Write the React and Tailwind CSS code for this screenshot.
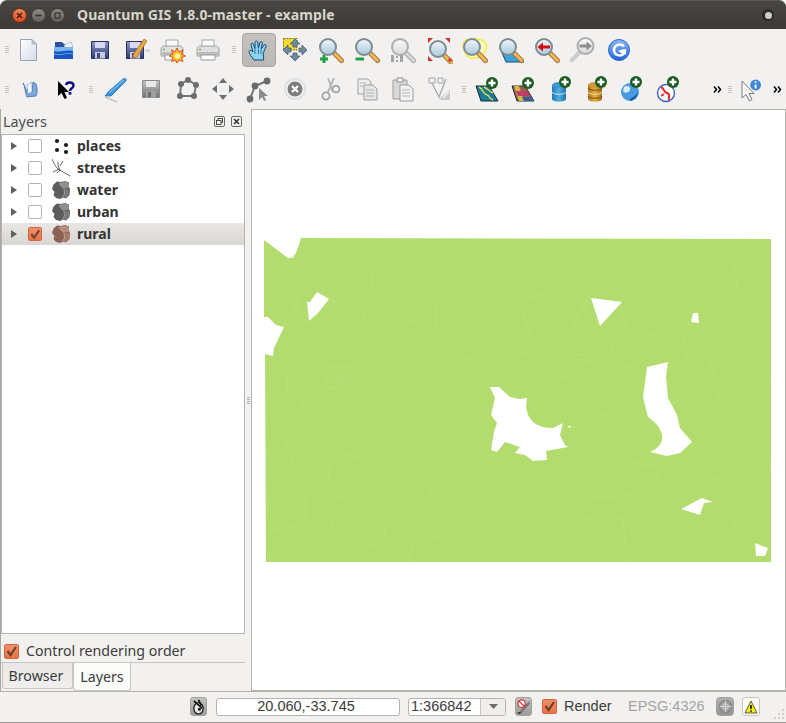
const UI_FONT = "font-['Noto_Sans',sans-serif]";

const Defs = () => (
  <svg className="h-0 w-0" aria-hidden="true">
    <defs>
      <linearGradient id="page" x1="0" y1="0" x2="1" y2="1">
        <stop offset="0" stopColor="#ffffff" />
        <stop offset="1" stopColor="#d5dbe6" />
      </linearGradient>
      <linearGradient id="floppy" x1="0" y1="0" x2="0" y2="1">
        <stop offset="0" stopColor="#8f9ac8" />
        <stop offset="1" stopColor="#2f3a78" />
      </linearGradient>
      <linearGradient id="floppyGrey" x1="0" y1="0" x2="0" y2="1">
        <stop offset="0" stopColor="#c6c6c6" />
        <stop offset="1" stopColor="#707070" />
      </linearGradient>
      <linearGradient id="lens" x1="0" y1="0" x2="0" y2="1">
        <stop offset="0" stopColor="#f0f6fa" />
        <stop offset="1" stopColor="#a9c8da" />
      </linearGradient>
      <linearGradient id="lensGrey" x1="0" y1="0" x2="0" y2="1">
        <stop offset="0" stopColor="#fafafa" />
        <stop offset="1" stopColor="#d8d8d8" />
      </linearGradient>
      <linearGradient id="blueBall" x1="0" y1="0" x2="0" y2="1">
        <stop offset="0" stopColor="#8fb8f5" />
        <stop offset="1" stopColor="#1f63d8" />
      </linearGradient>
      <linearGradient id="db" x1="0" y1="0" x2="1" y2="0">
        <stop offset="0" stopColor="#1f78b4" />
        <stop offset="0.5" stopColor="#55aee0" />
        <stop offset="1" stopColor="#1e6fa6" />
      </linearGradient>
      <linearGradient id="dbGold" x1="0" y1="0" x2="1" y2="0">
        <stop offset="0" stopColor="#b5791a" />
        <stop offset="0.5" stopColor="#e6ad3f" />
        <stop offset="1" stopColor="#a86f14" />
      </linearGradient>
    </defs>
  </svg>
);

const Ico = ({ children, size = 28 }) => (
  <svg width={size} height={size} viewBox="0 0 28 28" className="block shrink-0">
    {children}
  </svg>
);

const Plus = ({ x, y }) => (
  <g>
    <circle cx={x} cy={y} r="6" fill="#1d5b20" />
    <path d={`M${x - 3.5} ${y}H${x + 3.5}M${x} ${y - 3.5}V${y + 3.5}`} stroke="#fff" strokeWidth="2.4" />
  </g>
);

const Lens = ({ grey, children }) => (
  <g>
    <path d="M16 16L18 18" stroke={grey ? "#a8a8a8" : "#7b8288"} strokeWidth="3" />
    <path d="M18 18L24.5 24.5" stroke={grey ? "#a8a8a8" : "#a07a34"} strokeWidth="5" strokeLinecap="round" />
    <path d="M18 18L24.5 24.5" stroke={grey ? "#d8d8d8" : "#f0b65a"} strokeWidth="3" strokeLinecap="round" />
    <circle cx="11" cy="11" r="8" fill={grey ? "url(#lensGrey)" : "url(#lens)"} stroke={grey ? "#adadad" : "#7f8b92"} strokeWidth="2" />
    {children}
  </g>
);

const IconNew = () => (
  <Ico>
    <path d="M6.5 3.5H18L22.5 8V24.5H6.5Z" fill="url(#page)" stroke="#98a3b8" />
    <path d="M18 3.5V8H22.5Z" fill="#c3cbd9" stroke="#98a3b8" strokeWidth="0.6" />
  </Ico>
);

const IconOpen = () => (
  <Ico>
    <path d="M5 8L5 6H12L14 8H22V12H5Z" fill="#2b4f9c" />
    <path d="M14 9L21 6L23 11L15 12Z" fill="#f2f5fa" stroke="#7c8fb5" strokeWidth="0.5" />
    <path d="M4 11H23V23H4Z" fill="#1c56c4" />
    <path d="M4 11H23V15C17 13 10 17 4 15Z" fill="#79b7ef" />
    <path d="M4 18C10 20 17 16 23 18" stroke="#5ea2e8" strokeWidth="1" fill="none" />
  </Ico>
);

const Floppy = ({ grey }) => (
  <g>
    <path d="M5.5 5.5H22.5V22.5H5.5Z" fill={grey ? "url(#floppyGrey)" : "url(#floppy)"} stroke={grey ? "#8a8a8a" : "#2a2f63"} />
    <rect x="9" y="6" width="10" height="6" fill={grey ? "#e8e8e8" : "#d5daf0"} />
    <rect x="9" y="16" width="10" height="6.5" fill={grey ? "#a0a0a0" : "#c5cadf"} />
    <rect x="11" y="17" width="3" height="5" fill={grey ? "#6a6a6a" : "#414a87"} />
  </g>
);

const IconSave = () => (
  <Ico>
    <Floppy />
  </Ico>
);

const IconSaveAs = () => (
  <Ico>
    <g transform="translate(-1 0)">
      <Floppy />
    </g>
    <path d="M11 19L22 3L25 5L15 21L11 22Z" fill="#eaa844" stroke="#9a6a1c" strokeWidth="0.7" />
    <rect x="23" y="13" width="5" height="3" fill="#d8d8dc" />
  </Ico>
);

const Printer = () => (
  <g>
    <path d="M8 4H20V12H8Z" fill="#fafafa" stroke="#a6a6a6" />
    <path d="M3 13C3 11 5 10 7 10H21C23 10 25 11 25 13V20H3Z" fill="#e0e0e0" stroke="#a0a0a0" />
    <path d="M3 16H25V20H3Z" fill="#bcbcbc" />
    <path d="M7 19H21V24H7Z" fill="#fff" stroke="#9c9c9c" />
    <circle cx="6" cy="13.5" r="1" fill="#62b04c" />
  </g>
);

const IconPrintComposer = () => (
  <Ico>
    <Printer />
    <path d="M19 12L21 16L25 14L23.5 18L27.5 20L23.5 21.5L25 25.5L21 24L19 27L17.5 24L13.5 25.5L15 21.5L11.5 20L15 18L13.5 14L17 16Z" fill="#f8c52c" stroke="#e23c16" strokeWidth="0.9" />
    <circle cx="19.5" cy="20" r="2.5" fill="#fff3b0" />
  </Ico>
);

const IconPrint = () => (
  <Ico>
    <Printer />
  </Ico>
);

const IconPan = () => (
  <Ico>
    <path
      d="M9 24C7 21 4 18 4 15.5C4 14 6 14 7.5 15.5L8 16L6 9C5.6 7 8 6.5 8.6 8.5L10 12.5L10 6.5C10 4.5 12.6 4.5 12.8 6.5L13.4 12L15 6.5C15.6 4.8 17.8 5.4 17.4 7.2L16.2 13L18.8 9.2C20 7.8 21.8 9 21 10.6L18.5 16.5C18 19 19 21 18.5 24Z"
      fill="#8ed2f2"
      stroke="#164a73"
      strokeWidth="1"
      strokeLinejoin="round"
    />
    <path d="M10 13V18M13.4 12.5V18M16 13.5V18" stroke="#164a73" strokeWidth="0.7" />
  </Ico>
);

const IconZoomFull = () => (
  <Ico>
    <path d="M2.5 2.5H16V14H2.5Z" fill="#f3d92d" stroke="#8a7a1c" strokeDasharray="2 1" />
    <g fill="#6f8aa0" stroke="#3e5468" strokeWidth="0.7">
      <path d="M14 3L19 8H16V11H12V8H9Z" />
      <path d="M14 25L9 20H12V17H16V20H19Z" />
      <path d="M2 14L7 9V12H10V16H7V19Z" />
      <path d="M26 14L21 19V16H18V12H21V9Z" />
    </g>
  </Ico>
);

const IconZoomIn = () => (
  <Ico>
    <Lens />
    <path d="M3 23H11M7 19V27" stroke="#23a043" strokeWidth="3" />
  </Ico>
);

const IconZoomOut = () => (
  <Ico>
    <Lens />
    <path d="M2.5 23H11" stroke="#23a043" strokeWidth="3" />
  </Ico>
);

const IconZoomNative = () => (
  <Ico>
    <Lens grey />
    <g fill="#a4a4a4">
      <rect x="2" y="19" width="3" height="7" />
      <rect x="7" y="20" width="2" height="2" />
      <rect x="7" y="24" width="2" height="2" />
      <rect x="11" y="19" width="3" height="7" />
    </g>
  </Ico>
);

const IconZoomSelect = () => (
  <Ico>
    <g transform="translate(2 2)">
      <Lens />
    </g>
    <g fill="#d9302a">
      <path d="M3 2H8L3 7Z" />
      <path d="M25 2H20L25 7Z" />
      <path d="M3 25V20L8 25Z" />
      <circle cx="25" cy="24" r="1.8" />
    </g>
  </Ico>
);

const IconZoomLayer = () => (
  <Ico>
    <path d="M3 6C6 2 15 2 21 4C26 6 27 12 24 15C22 20 17 23 11 22C5 22 0 12 3 6Z" fill="#fbf9c4" stroke="#f5ec3e" strokeWidth="1.4" />
    <Lens />
  </Ico>
);

const IconZoomSelected = () => (
  <Ico>
    <path d="M3 12L16 18L27 26H9Z" fill="#3ba3e0" stroke="#174a6c" />
    <Lens />
  </Ico>
);

const IconZoomLast = () => (
  <Ico>
    <Lens />
    <path d="M4.5 11L10 6.5V9.5H17V12.5H10V15.5Z" fill="#d30d0d" />
  </Ico>
);

const IconZoomNext = () => (
  <Ico>
    <path d="M3 24L11 16" stroke="#cdcdcd" strokeWidth="4.5" strokeLinecap="round" />
    <circle cx="16.5" cy="10" r="8" fill="url(#lensGrey)" stroke="#adadad" strokeWidth="2" />
    <path d="M23 10L17.5 5.5V8.5H10.5V11.5H17.5V14.5Z" fill="#8d8d8d" />
  </Ico>
);

const IconRefresh = () => (
  <Ico>
    <circle cx="14" cy="14" r="10.5" fill="url(#blueBall)" stroke="#2a69cf" />
    <path d="M19 10.5C16 7 9 8.5 9 14C9 19.5 16 21 19 17.5L16 15.5L21 14.5" fill="none" stroke="#fff" strokeWidth="2.6" />
    <path d="M21 13L21 19L15.5 14Z" fill="#fff" />
  </Ico>
);

const IconBook = () => (
  <Ico>
    <path d="M7 8C9 10 9 18 11 22L20 21C22 17 21 11 20 9L17 7L16 17L12 18Z" fill="#7ea8dc" stroke="#3f6ea8" strokeWidth="0.8" />
    <path d="M11 10L16 7L16 17L12 19Z" fill="#f3f6fb" stroke="#6d8fbb" strokeWidth="0.6" />
  </Ico>
);

const IconWhatsThis = () => (
  <Ico>
    <path d="M6 6V21L9.5 18L12.5 24L15 23L12.5 17H17Z" fill="#000" />
    <path d="M14 10C14.5 6.5 21.5 6.5 21.5 10.5C21.5 13.5 18 13 18 16" fill="none" stroke="#10107c" strokeWidth="2.4" />
    <rect x="16.6" y="17" width="2.8" height="2.6" fill="#10107c" />
  </Ico>
);

const IconPencil = () => (
  <Ico>
    <path d="M4 21L7 17L22 4C24 2.5 26 4 25 6L10 21Z" fill="#3a93dc" stroke="#2b78bd" strokeWidth="0.8" />
    <path d="M8 18L23 5" stroke="#a4d4f6" strokeWidth="1" />
    <path d="M4 22L16 27" stroke="#c1c1c1" strokeWidth="1.4" />
  </Ico>
);

const IconSaveEdits = () => (
  <Ico>
    <Floppy grey />
  </Ico>
);

const IconAddFeature = () => (
  <Ico>
    <path d="M8 9L15 5L23 10L21 21L7 21Z" fill="none" stroke="#777" strokeWidth="2" />
    <g fill="#6d6d6d">
      <circle cx="8" cy="9" r="3" />
      <circle cx="15" cy="5" r="3" />
      <circle cx="23" cy="10" r="3" />
      <circle cx="21" cy="21" r="3" />
      <circle cx="7" cy="21" r="3" />
    </g>
  </Ico>
);

const IconMove = () => (
  <Ico>
    <g fill="#6f6f6f">
      <path d="M14 3L18 8H10Z" />
      <path d="M14 25L10 20H18Z" />
      <path d="M3 14L8 10V18Z" />
      <path d="M25 14L20 18V10Z" />
    </g>
  </Ico>
);

const IconNodes = () => (
  <Ico>
    <path d="M5 24L10 11L22 6" fill="none" stroke="#747474" strokeWidth="2" />
    <g fill="#6a6a6a">
      <circle cx="5" cy="24" r="3.4" />
      <circle cx="10" cy="11" r="3.4" />
      <circle cx="22" cy="6" r="3.4" />
    </g>
    <path d="M14 13V25L17 22L19 26L21 25L19 21H23Z" fill="#8a8a8a" />
  </Ico>
);

const IconDelete = () => (
  <Ico>
    <circle cx="14" cy="14" r="10" fill="#f5f5f5" stroke="#dfdfdf" strokeWidth="2" />
    <circle cx="14" cy="14" r="7.5" fill="#7d7d7d" />
    <path d="M11 11L17 17M17 11L11 17" stroke="#fff" strokeWidth="2.2" />
  </Ico>
);

const IconCut = () => (
  <Ico>
    <path d="M17 3L11 17M11 3L16 17" stroke="#b6b6b6" strokeWidth="2" />
    <circle cx="9" cy="21" r="3.6" fill="#f2f1f0" stroke="#a2a2a2" strokeWidth="1.8" />
    <circle cx="19" cy="14" r="3.4" fill="#f2f1f0" stroke="#a2a2a2" strokeWidth="1.8" />
  </Ico>
);

const IconCopy = () => (
  <Ico>
    <path d="M5 4H15L18 7V19H5Z" fill="#eeeeee" stroke="#9f9f9f" />
    <path d="M11 10H20L24 14V25H11Z" fill="#e6e6e6" stroke="#9f9f9f" />
    <path d="M13 15H21M13 18H21M13 21H21M7 8H13M7 11H10" stroke="#b4b4b4" />
  </Ico>
);

const IconPaste = () => (
  <Ico>
    <path d="M4 5H18V24H4Z" fill="#d8d8d8" stroke="#9c9c9c" />
    <path d="M8 3H14V7H8Z" fill="#f2f2f2" stroke="#8c8c8c" />
    <path d="M11 10H20L24 14V26H11Z" fill="#f2f2f2" stroke="#9c9c9c" />
    <path d="M13 15H21M13 18H21M13 21H21" stroke="#b4b4b4" />
  </Ico>
);

const IconNodeTool = () => (
  <Ico>
    <path d="M4 3H10V8H4ZM13 3H18V8H13Z" fill="#f0f0f0" stroke="#a5a5a5" />
    <path d="M7 8L14 22L21 4" fill="none" stroke="#a5a5a5" strokeWidth="1.2" />
    <path d="M14 24L25 15V25H16Z" fill="#c8c8c8" />
    <path d="M18 23L24 17" stroke="#f0f0f0" strokeWidth="1.4" />
  </Ico>
);

const IconAddVector = () => (
  <Ico>
    <path d="M2 11L15 11L24 26L7 26Z" fill="#1c7a99" stroke="#0d2c3f" />
    <path d="M5 12C10 14 8 19 13 20C16 20 14 24 19 25M10 12C14 14 15 16 19 18" fill="none" stroke="#e5e14a" strokeWidth="1.4" />
    <Plus x={18} y={8} />
  </Ico>
);

const IconAddRaster = () => (
  <Ico>
    <path d="M2 11H15L24 26H7Z" fill="#a15d4a" stroke="#222a38" />
    <path d="M4 11L9 26H14L9 11Z" fill="#d1bd46" />
    <path d="M6 16H17L20 21H8Z" fill="#c03d6a" />
    <path d="M12 22H22L24 26H14Z" fill="#3a5f96" />
    <Plus x={18} y={8} />
  </Ico>
);

const Cylinder = ({ fill, rim }) => (
  <g>
    <path d="M6 10V24C6 27.5 20 27.5 20 24V10Z" fill={fill} />
    <ellipse cx="13" cy="10" rx="7" ry="3" fill={rim} />
    <path d="M6 17C6 20 20 20 20 17" fill="none" stroke="#f2f1f0" strokeWidth="0.8" />
  </g>
);

const IconAddPostgis = () => (
  <Ico>
    <Cylinder fill="url(#db)" rim="#3d97cf" />
    <Plus x={19} y={7} />
  </Ico>
);

const IconAddSpatialite = () => (
  <Ico>
    <Cylinder fill="url(#dbGold)" rim="#cf9a38" />
    <path d="M6 13C6 16 20 16 20 13M6 21C6 24 20 24 20 21" fill="none" stroke="#5b3f0d" strokeWidth="0.8" />
    <Plus x={19} y={7} />
  </Ico>
);

const IconAddWms = () => (
  <Ico>
    <circle cx="12" cy="17" r="9" fill="#4a9ae2" />
    <path d="M6 12C9 10 13 11 12 15C10 18 7 19 5 16Z" fill="#d7ebf9" />
    <path d="M12 24C15 22 19 20 20 16C20 21 17 25 12 26Z" fill="#1a5f9e" />
    <Plus x={18} y={7} />
  </Ico>
);

const IconAddWfs = () => (
  <Ico>
    <circle cx="12" cy="18" r="8.5" fill="#fff" stroke="#3c5fc5" strokeWidth="1.4" />
    <path d="M7 12C11 14 9 17 13 18C17 19 14 22 15 25M10 19L7 21" fill="none" stroke="#e8232c" strokeWidth="2" />
    <Plus x={19} y={7} />
  </Ico>
);

const IconIdentify = () => (
  <Ico>
    <path d="M5 6V23L9 19.5L12.5 26L15 24.5L12 18.5H17Z" fill="#f6f6f6" stroke="#6f6f6f" strokeWidth="0.9" />
    <circle cx="18.6" cy="10" r="5.4" fill="#3f86d6" />
    <path d="M18.6 9.5V13.5M18.6 6.2V7.8" stroke="#fff" strokeWidth="1.8" />
  </Ico>
);

const Tool = ({ children, active }) => (
  <div className="flex h-[34px] w-9 shrink-0 items-center justify-center">
    {active ? (
      <div className="flex h-[34px] w-[34px] items-center justify-center rounded-[4px] border border-[#a8a6a2] bg-gradient-to-b from-[#c4c3c1] to-[#b9b8b5]">
        {children}
      </div>
    ) : (
      children
    )}
  </div>
);

const Grip = ({ width = "w-4" }) => (
  <div className={`flex shrink-0 justify-center ${width}`}>
    <div className="flex w-[4px] flex-col gap-[1px]">
      <div className="h-[1px] bg-[#c4c2bd]" />
      <div className="h-[1px] bg-[#c4c2bd]" />
      <div className="h-[1px] bg-[#c4c2bd]" />
      <div className="h-[1px] bg-[#c4c2bd]" />
    </div>
  </div>
);

const Chevrons = () => (
  <svg width="9" height="7" viewBox="0 0 9 7" className="block shrink-0">
    <path d="M1 0.5L3.5 3.5L1 6.5M5 0.5L7.5 3.5L5 6.5" fill="none" stroke="#000" strokeWidth="1.5" />
  </svg>
);

const TitleBar = () => (
  <div className="flex h-[29px] shrink-0 items-center rounded-t-[7px] border-t border-[#5a5954] bg-gradient-to-b from-[#474641] to-[#3b3a36]">
    <div className="ml-[12px] h-[15px] w-[15px] rounded-full border border-[#6d2c10] bg-gradient-to-b from-[#f3845a] to-[#d8481b]">
      <svg width="13" height="13" viewBox="0 0 13 13">
        <path d="M4 4L9 9M9 4L4 9" stroke="#41190a" strokeWidth="1.4" />
      </svg>
    </div>
    <div className="ml-[4px] h-[15px] w-[15px] rounded-full border border-[#3a3935] bg-gradient-to-b from-[#8c8a83] to-[#63615b]">
      <svg width="13" height="13" viewBox="0 0 13 13">
        <path d="M3.5 6.5H9.5" stroke="#33322e" strokeWidth="1.5" />
      </svg>
    </div>
    <div className="ml-[4px] h-[15px] w-[15px] rounded-full border border-[#3a3935] bg-gradient-to-b from-[#8c8a83] to-[#63615b]">
      <svg width="13" height="13" viewBox="0 0 13 13">
        <rect x="4" y="4" width="5" height="5" fill="none" stroke="#33322e" strokeWidth="1.2" />
      </svg>
    </div>
    <span className={`ml-[12px] pb-[2px] text-[14px] font-bold tracking-[0.09px] text-[#d8d4ca] ${UI_FONT}`}>
      Quantum GIS 1.8.0-master - example
    </span>
    <div className="ml-auto mr-[12px] flex h-[12px] w-[12px] items-center justify-center rounded-full bg-[#2b2a27]">
      <div className="h-[7px] w-[7px] rounded-full bg-[#cfcdc8]" />
    </div>
  </div>
);

const Toolbars = () => (
  <div className="shrink-0">
    <div className="flex h-[40px] items-center pt-[1px]">
      <div className="w-[10px] pl-[5px]">
        <Grip width="w-[4px]" />
      </div>
      <Tool><IconNew /></Tool>
      <Tool><IconOpen /></Tool>
      <Tool><IconSave /></Tool>
      <Tool><IconSaveAs /></Tool>
      <Tool><IconPrintComposer /></Tool>
      <Tool><IconPrint /></Tool>
      <Grip width="w-[15px]" />
      <Tool active><IconPan /></Tool>
      <Tool><IconZoomFull /></Tool>
      <Tool><IconZoomIn /></Tool>
      <Tool><IconZoomOut /></Tool>
      <Tool><IconZoomNative /></Tool>
      <Tool><IconZoomSelect /></Tool>
      <Tool><IconZoomLayer /></Tool>
      <Tool><IconZoomSelected /></Tool>
      <Tool><IconZoomLast /></Tool>
      <Tool><IconZoomNext /></Tool>
      <Tool><IconRefresh /></Tool>
    </div>
    <div className="flex h-[40px] items-center">
      <div className="w-[12px] pl-[5px]">
        <Grip width="w-[4px]" />
      </div>
      <Tool><IconBook /></Tool>
      <Tool><IconWhatsThis /></Tool>
      <Grip width="w-[13px]" />
      <Tool><IconPencil /></Tool>
      <Tool><IconSaveEdits /></Tool>
      <Tool><IconAddFeature /></Tool>
      <Tool><IconMove /></Tool>
      <Tool><IconNodes /></Tool>
      <Tool><IconDelete /></Tool>
      <Tool><IconCut /></Tool>
      <Tool><IconCopy /></Tool>
      <Tool><IconPaste /></Tool>
      <Tool><IconNodeTool /></Tool>
      <Grip width="w-[13px]" />
      <Tool><IconAddVector /></Tool>
      <Tool><IconAddRaster /></Tool>
      <Tool><IconAddPostgis /></Tool>
      <Tool><IconAddSpatialite /></Tool>
      <Tool><IconAddWms /></Tool>
      <Tool><IconAddWfs /></Tool>
      <div className="ml-[27px] shrink-0"><Chevrons /></div>
      <Grip width="w-[15px]" />
      <IconIdentify />
      <div className="ml-[8px] shrink-0"><Chevrons /></div>
    </div>
  </div>
);

const Check = ({ checked, big }) => (
  <div
    className={`flex shrink-0 items-center justify-center rounded-[2px] border ${big ? "h-[15px] w-[15px]" : "h-[14px] w-[14px]"} ${
      checked ? "border-[#d0683f] bg-gradient-to-b from-[#f2906a] to-[#ea7040]" : "border-[#b5b3ae] bg-white"
    }`}
  >
    {checked && (
      <svg width="13" height="13" viewBox="0 0 13 13">
        <path d="M2.5 6L5.5 10L11 2" fill="none" stroke="#6a4030" strokeWidth="2.2" />
      </svg>
    )}
  </div>
);

const Stone = ({ brown }) => (
  <svg width="18" height="18" viewBox="0 0 18 18" className="block shrink-0">
    <path d="M5 0.5L9 1L13 0L17 1.5L16.5 5L18 8L17.5 14L14 17.5L11 16.5L8 18L4 17L1.5 14L2.5 11L0 8L1.5 3.5Z" fill={brown ? "#8d6153" : "#5c5c5c"} />
    <path d="M7 2L13 0.5L16.6 1.8L16.2 5.2L17 7L12 7.5L9 5Z" fill={brown ? "#b88d7e" : "#8e8e8e"} />
    <path d="M12 8.5L17.6 8L17.2 13.8L14 17L10.5 16L12.5 13Z" fill={brown ? "#a67a6b" : "#787878"} />
    <path d="M9 5L12 7.5V8.5L12.5 13L10.5 16M7 2L9 5" fill="none" stroke={brown ? "#d9c2b8" : "#b8b8b8"} strokeWidth="0.6" />
  </svg>
);

const Dots = () => (
  <svg width="18" height="18" viewBox="0 0 18 18" className="block shrink-0">
    <g fill="#1b1b1b">
      <circle cx="5" cy="4" r="2.1" />
      <circle cx="5" cy="13" r="2.1" />
      <circle cx="14" cy="8" r="2.1" />
      <circle cx="14" cy="15" r="2.1" />
    </g>
  </svg>
);

const Streets = () => (
  <svg width="18" height="18" viewBox="0 0 18 18" className="block shrink-0">
    <path d="M0 0C2 4 3 7 6 10L18 17M6 3C6 6 6 8 8 11M8 7L11 2M1 13L7 10M5 14L8 11" fill="none" stroke="#3e3e3e" strokeWidth="0.8" />
  </svg>
);

const LayerRow = ({ name, icon, checked, selected }) => (
  <div className={`flex h-[22px] items-center ${selected ? "bg-gradient-to-b from-[#e8e7e5] to-[#d8d6d3]" : ""}`}>
    <svg width="6" height="8" viewBox="0 0 6 8" className="ml-[9px] block shrink-0">
      <path d="M0 0L6 4L0 8Z" fill="#5f5f5b" />
    </svg>
    <div className="ml-[11px]"><Check checked={checked} /></div>
    <div className="ml-[10px]">{icon}</div>
    <span className={`ml-[7px] pb-[2px] text-[14px] font-bold text-[#333] ${UI_FONT}`}>{name}</span>
  </div>
);

const LayersDock = () => (
  <div className="flex w-[245px] shrink-0 flex-col border-l border-[#a9a7a2]">
    <div className="flex h-[25px] shrink-0 items-center justify-between pl-[2px] pr-[3px]">
      <span className={`text-[14.4px] text-[#4c4c4c] ${UI_FONT}`}>Layers</span>
      <div className="flex gap-[6px]">
        <svg width="11" height="11" viewBox="0 0 11 11" className="block">
          <rect x="0.5" y="0.5" width="10" height="10" rx="1.5" fill="none" stroke="#6a6a66" />
          <rect x="4" y="2.5" width="4.5" height="4" fill="none" stroke="#4c4c48" />
          <rect x="2.5" y="4.5" width="4.5" height="4" fill="#f2f1f0" stroke="#4c4c48" />
        </svg>
        <svg width="11" height="11" viewBox="0 0 11 11" className="block">
          <rect x="0.5" y="0.5" width="10" height="10" rx="1.5" fill="none" stroke="#6a6a66" />
          <path d="M3 3L8 8M8 3L3 8" stroke="#333" strokeWidth="1.6" />
        </svg>
      </div>
    </div>
    <div className="min-h-0 flex-1 border border-[#b5b3ae] bg-white">
      <LayerRow name="places" icon={<Dots />} />
      <LayerRow name="streets" icon={<Streets />} />
      <LayerRow name="water" icon={<Stone />} />
      <LayerRow name="urban" icon={<Stone />} />
      <LayerRow name="rural" icon={<Stone brown />} checked selected />
    </div>
    <div className="flex h-[28px] shrink-0 items-center pl-[3px] pt-[6px]">
      <Check checked big />
      <span className={`ml-[7px] text-[14.2px] text-[#3c3c3c] ${UI_FONT}`}>Control rendering order</span>
    </div>
    <div className="flex h-[29px] shrink-0 border-t border-[#c8c6c1] pl-[1px]">
      <div className="flex h-[26px] w-[71px] items-center justify-center rounded-b-[3px] border border-t-0 border-[#c8c6c1] bg-gradient-to-b from-[#e9e8e6] to-[#f0efed] pr-[3px]">
        <span className={`text-[14.2px] text-[#3c3c3c] ${UI_FONT}`}>Browser</span>
      </div>
      <div className="flex h-[28px] w-[58px] items-center justify-center rounded-b-[3px] border border-t-0 border-[#c8c6c1] bg-[#fbfbfa]">
        <span className={`text-[14.2px] text-[#3c3c3c] ${UI_FONT}`}>Layers</span>
      </div>
    </div>
  </div>
);

const Splitter = () => (
  <div className="flex w-[6px] shrink-0 flex-col items-center justify-center gap-[1px]">
    <div className="h-[1px] w-[3px] bg-[#b0aea9]" />
    <div className="h-[1px] w-[3px] bg-[#b0aea9]" />
    <div className="h-[1px] w-[3px] bg-[#b0aea9]" />
    <div className="h-[1px] w-[3px] bg-[#b0aea9]" />
  </div>
);

const MAP_OUTLINE =
  "M264 240L288 258L293 258Q298 250 301 238L771 239L771 562L266 562L265 354L273 356L274 348L284 327L276 325L268 317L264 317Z";

// the lakes are painted white over the parcel lines
const MAP_HOLES = [
  "M307 302L310 302L317 292L329 299L318 313L309 321Z",
  "M591 298L622 302L600 326Z",
  "M693 313L698 313L699 323L691 322Z",
  "M490 387L499 387L510 397L520 399L527 398L526 406Q528 428 553 428L563 423L560 435L565 445L568 447L546 451L547 460L533 461L525 455L515 453L520 447L505 442L497 452L491 450L494 432L497 423L491 415L495 398Z",
  "M647 367L668 362L666 377L668 398L677 415L680 428L692 442L680 453L667 456L650 452Q664 446 662 435Q660 425 648 417L643 397Z",
  "M681 509L702 498L713 502L704 503L700 515Z",
  "M755 543L768 548L765 556L756 556Z",
  "M567 426L571 426L570 428Z",
];

const MAP_LINES = [
  "M266 262L275 267L303 250",
  "M302 283L288 328M305 284L291 328",
  "M315 288L365 322L422 348L425 357L522 362",
  "M340 239L342 248L360 263L372 272L373 290L362 305L365 322",
  "M422 252L422 268L435 273L452 267L468 275L455 302L435 305L437 325L425 345",
  "M362 305L392 313L392 318L437 325",
  "M325 367L360 368L382 353L397 362L462 382",
  "M288 372L287 395L305 398L297 425L282 438",
  "M305 398L332 388L365 405L385 398L392 412L412 395L432 397L438 412L455 405",
  "M298 425L317 442L338 452L373 462L375 468L398 470L435 458",
  "M338 452L330 465L328 485L305 495L305 525L267 530",
  "M432 482L455 475L478 488L472 512L442 515L430 498L432 482",
  "M415 517L440 527L440 537L415 538L408 561",
  "M385 527L383 543L348 548L332 525L335 500L375 475",
  "M673 239L645 258L640 272L660 292L702 338L688 362",
  "M708 252L735 265L737 288L700 305L738 322L747 335L770 328",
  "M640 272L620 303L628 340L663 332L683 332L688 362",
  "M565 335L572 327L583 303L592 325L610 338L612 352L602 355L565 355L565 335",
  "M520 353L563 357L637 368L613 382L545 375",
  "M572 395L630 395L620 412L587 418L573 438L587 455",
  "M617 458L657 468L657 485L633 495L593 498L620 465M650 455L657 468",
  "M720 462L770 462L770 473",
  "M687 478L710 478L720 480L730 498L737 508L733 542L770 522",
  "M623 518L663 517L680 535L690 538L707 553",
  "M553 482L540 505L557 525L593 518L623 518L627 561",
  "M325 367L350 365L348 388L328 387Z",
  "M330 372L347 385M345 369L333 386M340 366L340 388M328 380L350 375",
  "M470 420L482 405L490 395",
  "M266 290L300 300M285 340L300 345L320 370",
  "M520 300L560 290L590 295L570 330",
  "M480 290L520 300L530 335L520 353",
  "M710 360L720 400L770 380",
  "M690 400L700 430L730 440L770 420",
  "M590 430L620 420L650 465",
  "M480 480L520 470L553 482",
  "M480 520L520 540L540 505",
  "M350 500L300 480L285 440",
  "M400 470L410 510L385 527",
];

const MapCanvas = () => (
  <div className="min-w-0 flex-1 border border-[#b5b3ae] bg-white">
    <svg width="533" height="581" viewBox="252 110 533 581" className="block">
      <path d={MAP_OUTLINE} fill="#b2dd6e" />
      <g fill="none" stroke="#bbe17f" strokeWidth="0.6">
        {MAP_LINES.map((d) => (
          <path key={d} d={d} />
        ))}
      </g>
      <path d={MAP_HOLES.join(" ")} fill="#fff" />
    </svg>
  </div>
);

const StatusIcon = ({ children, className = "" }) => (
  <div className={`flex h-[19px] w-[17px] shrink-0 items-center justify-center rounded-[3px] border border-[#a3a19c] bg-gradient-to-b from-[#c4c3c0] to-[#9d9c99] ${className}`}>
    {children}
  </div>
);

const StatusBar = () => (
  <div className="flex h-[31px] shrink-0 items-center border-t border-[#b5b3ae] pb-[1px]">
    <div className="flex-1" />
    <StatusIcon>
      <svg width="15" height="17" viewBox="0 0 16 18">
        <ellipse cx="8" cy="11" rx="5" ry="6" fill="#e8e8e8" stroke="#111" strokeWidth="1.3" />
        <path d="M3 3L12 11M8 2L11 8" stroke="#111" strokeWidth="1.8" />
        <circle cx="9" cy="12" r="1.6" fill="#111" />
      </svg>
    </StatusIcon>
    <div className="ml-[9px] flex h-[18px] w-[184px] shrink-0 items-center justify-center rounded-[3px] border border-[#b5b3ae] bg-white pr-[4px]">
      <span className="font-['Liberation_Sans',sans-serif] text-[14.5px] text-[#3c3c3c]">20.060,-33.745</span>
    </div>
    <div className="ml-[8px] flex h-[18px] w-[98px] shrink-0 rounded-[3px] border border-[#b5b3ae] bg-white">
      <span className="flex flex-1 items-center overflow-hidden pl-[2px] font-['Liberation_Sans',sans-serif] text-[14.5px] text-[#3c3c3c]">1:366842</span>
      <div className="flex w-[25px] items-center justify-center rounded-r-[3px] border-l border-[#c8c6c1] bg-[#efeeec]">
        <svg width="9" height="5" viewBox="0 0 9 5">
          <path d="M0 0H9L4.5 5Z" fill="#6b6b68" />
        </svg>
      </div>
    </div>
    <StatusIcon className="ml-[9px]">
      <svg width="15" height="17" viewBox="0 0 16 18">
        <path d="M14 3L4 14L6 16L15 6Z" fill="#7a7a7a" />
        <path d="M1 16C3 15 4 14 6 16L3 17Z" fill="#333" />
        <circle cx="6" cy="6" r="4" fill="#fff" stroke="#d4333c" strokeWidth="1.4" />
        <path d="M3 3L9 9" stroke="#d4333c" strokeWidth="1.4" />
      </svg>
    </StatusIcon>
    <div className="ml-[10px]"><Check checked big /></div>
    <span className="ml-[7px] w-[48px] font-['Liberation_Sans',sans-serif] text-[14.5px] text-[#3c3c3c]">Render</span>
    <span className="ml-[16px] w-[78px] font-['Liberation_Sans',sans-serif] text-[14.5px] text-[#a4a4a2]">EPSG:4326</span>
    <div className="ml-[10px] flex h-[19px] w-[18px] shrink-0 items-center justify-center rounded-[4px] border border-[#a3a19c] bg-gradient-to-b from-[#b0afad] to-[#959492]">
      <svg width="15" height="15" viewBox="0 0 16 16">
        <circle cx="8" cy="8" r="6.5" fill="#9d9d9d" stroke="#777" />
        <path d="M8 1.5V14.5M1.5 8H14.5" stroke="#dadada" strokeWidth="1" />
        <circle cx="8" cy="8" r="3" fill="none" stroke="#dadada" />
      </svg>
    </div>
    <div className="ml-[8px] flex h-[19px] w-[18px] shrink-0 items-center justify-center rounded-[3px] border border-[#c8c6c1] bg-[#fdfdfc]">
      <svg width="14" height="14" viewBox="0 0 14 14">
        <path d="M7 1L13 13H1Z" fill="#f6ee14" stroke="#333" strokeWidth="0.8" />
        <path d="M7 5V9M7 10.2V11.8" stroke="#111" strokeWidth="1.6" />
      </svg>
    </div>
    <div className="flex h-full w-[26px] shrink-0 items-end justify-end pb-[2px] pr-[2px]">
      <svg width="10" height="10" viewBox="0 0 10 10">
        <g fill="#d0cec9">
          <rect x="8" y="0" width="2" height="2" />
          <rect x="4" y="4" width="2" height="2" />
          <rect x="8" y="4" width="2" height="2" />
          <rect x="0" y="8" width="2" height="2" />
          <rect x="4" y="8" width="2" height="2" />
          <rect x="8" y="8" width="2" height="2" />
        </g>
      </svg>
    </div>
  </div>
);

export default function App() {
  return (
    <div className="flex h-[723px] w-[786px] flex-col overflow-hidden bg-white">
      <Defs />
      <TitleBar />
      <div className="flex min-h-0 flex-1 flex-col border-b border-[#a09e99] bg-[#f2f1f0]">
        <Toolbars />
        <div className="flex min-h-0 flex-1">
          <LayersDock />
          <Splitter />
          <MapCanvas />
        </div>
        <StatusBar />
      </div>
    </div>
  );
}
